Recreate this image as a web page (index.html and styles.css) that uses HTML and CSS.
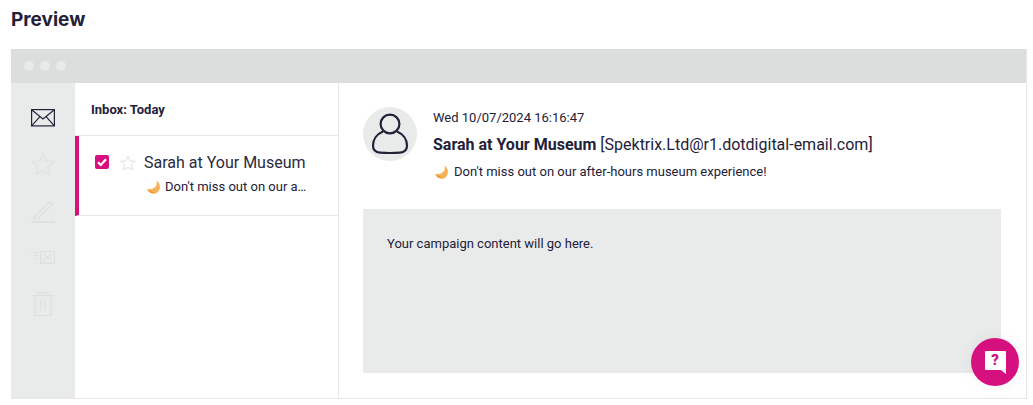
FILE: index.html
```html
<!DOCTYPE html>
<html lang="en">
<head>
<meta charset="utf-8">
<title>Preview</title>
<link rel="stylesheet" href="styles.css">
</head>
<body>
<h1 class="title">Preview</h1>
<div class="window">
  <div class="titlebar"><i class="dot"></i><i class="dot"></i><i class="dot"></i></div>
  <div class="panes">
    <nav class="rail">
      <svg class="ic ic-mail" viewBox="0 0 24 18" fill="none" stroke="#23213a" stroke-width="1.2"><rect x=".6" y=".6" width="22.8" height="16.3"/><path d="M.6.8 12 10 23.4.8M.6 16.8l8.3-9.2M23.4 16.8l-8.3-9.2"/></svg>
      <svg class="ic ic-star" viewBox="0 0 24 24" fill="none" stroke="#dfe1e1" stroke-width="1.2"><path d="M12 1.500l3.200 7.200 7.800.8-5.900 5.200 1.700 7.700-6.800-4-6.800 4 1.700-7.700L1 9.500l7.800-.8z"/></svg>
      <svg class="ic ic-pen" viewBox="0 0 24 24" fill="none" stroke="#dcdfdf" stroke-width="1.2"><path d="M2.500 19 18.500 2.500l3 2.800L6 20.500H2.500z"/><path d="M0 23.200h24" stroke-width="1.8"/></svg>
      <svg class="ic ic-fwd" viewBox="0 0 24 13" fill="none" stroke="#dcdfdf" stroke-width="1.2"><rect x="9.500" y=".6" width="14" height="11.500"/><path d="M12.500 3.500l8 5.500M20.500 3.500l-8 5.500M0 1.500h7M2.500 4.500h4.500M4 7.500h3"/></svg>
      <svg class="ic ic-bin" viewBox="0 0 22 24" fill="none" stroke="#dcdfdf" stroke-width="1.2"><path d="M0 3.500h22M3 3.500v20h16v-20M6 3.500V.6h10v2.900M9 8v11M13 8v11"/></svg>
    </nav>
    <section class="list">
      <div class="list-head">Inbox: Today</div>
      <div class="row">
        <span class="check"><svg viewBox="0 0 14 14" fill="none" stroke="#fff" stroke-width="2.2"><path d="M3 7.300l2.800 2.700L11 4.300"/></svg></span>
        <svg class="row-star" viewBox="0 0 24 24" fill="none" stroke="#dfe1e1" stroke-width="1.5"><path d="M12 1.500l3.200 7.200 7.800.8-5.900 5.200 1.700 7.700-6.800-4-6.800 4 1.700-7.700L1 9.500l7.800-.8z"/></svg>
        <div class="row-text">
          <div class="row-from">Sarah at Your Museum</div>
          <div class="row-subj"><svg class="moon" viewBox="0 0 14 14"><path d="M9.300.3C11 4.500 8.500 10 .3 9.300 1.500 12.500 5 14 8 13.500 13.500 12.500 15 4 9.300.3z" fill="#f5b25a"/><path d="M.3 9.300C1.500 12.500 5 14 8 13.500 6.500 11.800 3 10.800.3 9.300z" fill="#ee9a3c"/></svg><span class="clip">Don't miss out on our a…</span></div>
        </div>
      </div>
    </section>
    <main class="detail">
      <header class="head">
        <div class="avatar"><svg viewBox="0 0 54 54" fill="none" stroke="#23213a" stroke-width="2.2"><circle cx="27" cy="17" r="9.400"/><path d="M20 24.500C14 27 10 32.500 10 38.500c0 4.500 2.800 6.800 7 7.100 6 .5 14 .5 20 0 4.200-.3 7-2.600 7-7.100 0-6-4-11.500-10-14"/></svg></div>
        <div class="meta">
          <div class="date">Wed 10/07/2024 16:16:47</div>
          <div class="sender"><b>Sarah at Your Museum</b> [Spektrix.Ltd@r1.dotdigital-email.com]</div>
          <div class="subject"><svg class="moon" viewBox="0 0 14 14"><path d="M9.300.3C11 4.500 8.500 10 .3 9.300 1.500 12.500 5 14 8 13.500 13.500 12.500 15 4 9.300.3z" fill="#f5b25a"/><path d="M.3 9.300C1.500 12.500 5 14 8 13.500 6.500 11.800 3 10.800.3 9.300z" fill="#ee9a3c"/></svg>Don't miss out on our after-hours museum experience!</div>
        </div>
      </header>
      <div class="content">Your campaign content will go here.</div>
    </main>
  </div>
</div>
<button class="help" type="button" aria-label="Help"><span class="bubble">?</span></button>
</body>
</html>
```

FILE: styles.css
```css
* { box-sizing: border-box; }
html, body { height: 100%; }
body {
  margin: 0;
  background: #fff;
  color: #23213a;
  font-family: Roboto, sans-serif;
  overflow: hidden;
  padding: 0 6px 0 11px;
}
.title {
  margin: 0;
  padding-top: 7px;
  height: 49px;
  font-family: Inter, sans-serif;
  font-size: 19px;
  line-height: 26px;
  font-weight: 700;
}
.window {
  height: 350px;
  display: flex;
  flex-direction: column;
  border: 1px solid #e6e8e8;
  border-top: 0;
  border-left: 0;
}
.titlebar {
  height: 34px;
  flex: none;
  background: #dcdede;
  display: flex;
  align-items: center;
  gap: 6px;
  padding-left: 13px;
}
.dot { width: 10px; height: 10px; border-radius: 50%; background: #e9ebeb; }
.panes { flex: 1; display: flex; min-height: 0; }
.rail {
  width: 64px;
  flex: none;
  background: #e9ebeb;
  display: flex;
  flex-direction: column;
  align-items: center;
}
.ic { display: block; flex: none; }
.ic-mail { width: 24px; height: 18px; margin-top: 26px; }
.ic-star { width: 24px; height: 24px; margin-top: 25px; }
.ic-pen { width: 24px; height: 24px; margin-top: 23px; }
.ic-fwd { width: 24px; height: 13px; margin-top: 28px; }
.ic-bin { width: 22px; height: 24px; margin-top: 28px; }
.list { width: 264px; flex: none; border-right: 1px solid #e6e8e8; }
.list-head {
  height: 53px;
  padding: 1px 0 0 16px;
  display: flex;
  align-items: center;
  font-size: 13px;
  font-weight: 700;
  border-bottom: 1px solid #e6e8e8;
}
.row {
  height: 80px;
  border-left: 4px solid #d6107f;
  border-bottom: 1px solid #e6e8e8;
  display: flex;
  align-items: flex-start;
  padding: 15px 0 0 16px;
}
.check {
  width: 14px; height: 14px;
  margin-top: 4px;
  border-radius: 2px;
  background: #d6107f;
  flex: none;
}
.check svg { display: block; width: 14px; height: 14px; }
.row-star { width: 16px; height: 16px; margin: 4px 0 0 11px; flex: none; }
.row-text { margin-left: 8px; padding-top: 1px; }
.row-from { font-size: 16px; line-height: 22px; color: #2b2a42; }
.row-subj { display: flex; align-items: center; margin-top: 5px; font-size: 13px; line-height: 16px; padding-left: 3px; }
.row-subj .moon { margin-right: 4px; }
.moon { width: 14px; height: 14px; flex: none; margin-right: 5px; }
.clip { white-space: nowrap; }
.detail { flex: 1; min-width: 0; padding: 24px 25px 0 24px; }
.head { display: flex; height: 102px; }
.avatar {
  width: 54px; height: 54px;
  border-radius: 50%;
  background: #e9ebeb;
  display: flex;
  align-items: center;
  justify-content: center;
  flex: none;
}
.avatar svg { width: 54px; height: 54px; }
.meta { margin-left: 16px; }
.date { font-size: 13px; line-height: 16px; margin-top: 3px; }
.sender { font-size: 16px; line-height: 22px; margin-top: 8px; }
.subject { display: flex; align-items: center; font-size: 13px; line-height: 16px; margin-top: 8px; padding-left: 2px; }
.content {
  height: 164px;
  background: #e9ebeb;
  padding: 27px 24px;
  font-size: 13px;
  line-height: 16px;
}
.help {
  position: absolute;
  left: 971px;
  top: 338px;
  width: 48px;
  height: 48px;
  padding: 0 0 4px;
  border: 0;
  border-radius: 50%;
  background: #d6107f;
  box-shadow: 0 0 16px rgba(0,0,0,.06);
  display: flex;
  align-items: center;
  justify-content: center;
}
.bubble {
  position: relative;
  width: 21px;
  height: 19px;
  background: #fff;
  border-radius: 1px;
  color: #d6107f;
  font: 900 15px/19px Roboto, sans-serif;
  text-align: center;
}
.bubble::after {
  content: "";
  position: absolute;
  right: 0;
  top: 100%;
  border-top: 4px solid #fff;
  border-left: 5px solid transparent;
}
```
